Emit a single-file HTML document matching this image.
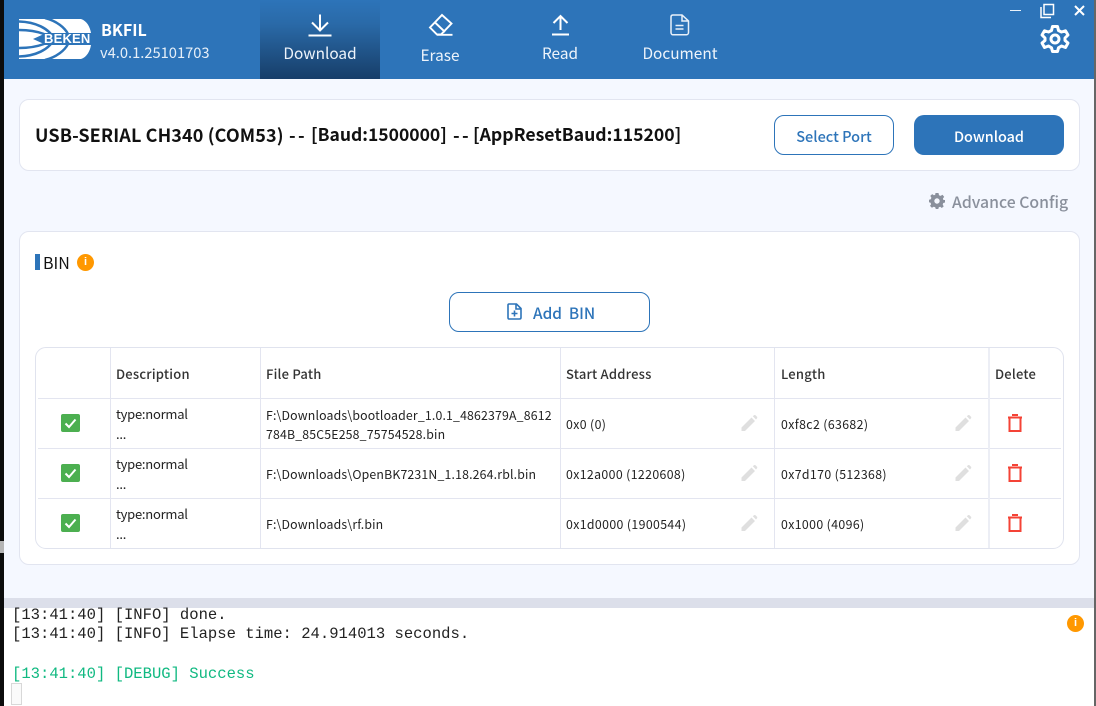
<!DOCTYPE html>
<html><head><meta charset="utf-8"><style>
*{box-sizing:border-box}
html,body{margin:0;padding:0}
body{width:1096px;height:706px;position:relative;overflow:hidden;background:#f5f8ff;font-family:"Noto Sans CJK SC","Liberation Sans",sans-serif;color:#222}
.a{position:absolute;white-space:nowrap}
.t{line-height:20px;font-size:13px;letter-spacing:-.25px}
.h{font-size:13px;line-height:20px;color:#333;letter-spacing:.22px;font-weight:500}
.f{line-height:20px;font-size:12.300px;letter-spacing:.17px}
.n{line-height:20px;font-size:12.300px;letter-spacing:.38px}
.nav{color:#eef4fb;font-size:15.400px;line-height:20px;text-align:center;width:120px}
.card{position:absolute;background:#fff;border:1px solid #e2e5f0;border-radius:10px}
.l{position:absolute;background:#e3e5f0}
.log{position:absolute;left:12px;font:15.55px/20px "Liberation Mono",monospace;color:#222;white-space:pre}
.info{position:absolute;border-radius:50%;background:#ff9800;color:#fff;font:bold 11px/17px 'Liberation Sans',sans-serif;text-align:center}
.ti{position:absolute;top:122px;white-space:nowrap;line-height:26px;font-weight:700;color:#111}
</style></head><body>
<div class="a" style="left:0;top:0;width:4px;height:706px;background:#0c0c0c"></div>
<div class="a" style="left:0;top:541px;width:4px;height:12px;background:#b5b5b5"></div>
<div class="a" style="left:1094px;top:0;width:2px;height:706px;background:#666"></div>
<div class="a" style="left:4px;top:0;width:1090px;height:79px;background:#2d74b9"></div>
<div class="a" style="left:260px;top:0;width:120px;height:79px;background:linear-gradient(#2d74b9 0%,#2a6aa8 30%,#173e69 100%)"></div>

<svg class="a" style="left:19px;top:19px" width="72" height="40" viewBox="0 0 72 40">
<path fill="#fff" d="M0 0H62C68 2 71 8 72 14V26C71 32 68 38 62 40H0Z"/>
<rect x="24" y="14" width="48" height="12" fill="#2d74b9"/>
<g fill="none" stroke="#2d74b9" stroke-width="2.500">
<path d="M0 2.500C16 3 30 9 35 20C30 31 16 37 0 37.500"/>
<path d="M0 11C9 11 17 12 25 15M0 29C9 29 17 28 25 25"/>
<path d="M26 -1C38 2 46 9 49 15M26 41C38 38 46 31 49 25"/>
</g>
<path fill="#2d74b9" d="M25 15V25L14 20Z"/>
</svg>
<div class="a" style="left:44px;top:31px;font:bold 13px/15px 'Liberation Sans',sans-serif;color:#fff;letter-spacing:.2px">BEKEN</div>
<div class="a" style="left:101px;top:19px;font-size:16px;line-height:20px;font-weight:700;color:#fff">BKFIL</div>
<div class="a" style="left:100px;top:43px;font-size:14.700px;line-height:20px;color:#e6eff8">v4.0.1.25101703</div>

<svg class="a" style="left:307px;top:13px" width="26" height="24" viewBox="0 0 26 24" fill="none" stroke="#fff" stroke-width="2"><path d="M1.500 22.500H24.500M13 1.500V17M5 9.500L13 17.500L21 9.500"/></svg>
<div class="a nav" style="left:260px;top:43px">Download</div>

<svg class="a" style="left:428px;top:13px" width="25" height="24" viewBox="0 0 25 24" fill="none" stroke="#fff" stroke-width="1.900"><path d="M14 2L23.500 10.500L13 21.500H9L2 14.500ZM6.500 9L17 19M9 21.800H24.500"/></svg>
<div class="a nav" style="left:380px;top:45px">Erase</div>

<svg class="a" style="left:551px;top:14px" width="19" height="22" viewBox="0 0 19 22" fill="none" stroke="#fff" stroke-width="2"><path d="M1 20.500H18M9.500 16V2M2.500 9L9.500 2L16.500 9"/></svg>
<div class="a nav" style="left:500px;top:43px">Read</div>

<svg class="a" style="left:670px;top:14px" width="20" height="22" viewBox="0 0 20 22" fill="none" stroke="#e8f0f9" stroke-width="1.500"><path d="M3 1H12L18.500 7V18.500C18.500 19.800 17.500 20.800 16.500 20.800H3C1.800 20.800 1 19.800 1 18.500V3C1 1.800 1.800 1 3 1ZM12 1V7H18.500M5.500 11.500H13.500M5.500 15H13.500"/></svg>
<div class="a nav" style="left:620px;top:43px">Document</div>

<div class="a" style="left:1010px;top:10px;width:11px;height:1px;background:#eaf2fa"></div>
<svg class="a" style="left:1040px;top:3px" width="15" height="16" viewBox="0 0 15 16" fill="none" stroke="#fff" stroke-width="1.500"><path d="M4 1.500H13.500V11.500H4ZM1 4V14.500H11"/></svg>
<svg class="a" style="left:1074px;top:5px" width="11" height="11" viewBox="0 0 11 11" fill="none" stroke="#fff" stroke-width="2"><path d="M1 1L10 10M10 1L1 10"/></svg>
<svg class="a" style="left:1040px;top:24px" width="30" height="30" viewBox="0 0 30 30" fill="none" stroke="#fff" stroke-width="3" stroke-linejoin="round"><path d="M12.500 2.500H17.500L18.500 6.500L21.500 8L25.500 6.800L28 11L25 14V16.500L28 19L25.500 23.500L21.500 22L18.500 23.800L17.500 27.500H12.500L11.500 23.800L8.500 22L4.500 23.500L2 19L5 16.500V14L2 11L4.500 6.800L8.500 8L11.500 6.500Z"/><circle cx="15" cy="15" r="4"/></svg>

<div class="card" style="left:19px;top:99px;width:1061px;height:72px"></div>
<div class="ti" style="left:35px;font-size:18px;letter-spacing:.11px">USB-SERIAL CH340 (COM53)</div>
<div class="ti" style="left:289px;font-size:18px;letter-spacing:2.400px">--</div>
<div class="ti" style="left:311px;font-size:17.500px">[Baud:1500000]</div>
<div class="ti" style="left:453px;font-size:18px;letter-spacing:2.400px">--</div>
<div class="ti" style="left:473px;font-size:17.600px">[AppResetBaud:115200]</div>
<div class="a" style="left:774px;top:115px;width:120px;height:40px;border:1px solid #2d74b9;border-radius:10px;background:#fff;color:#2d74b9;font-size:14.500px;line-height:42px;text-align:center;font-weight:500">Select Port</div>
<div class="a" style="left:914px;top:115px;width:150px;height:40px;border-radius:10px;background:#2d74b9;color:#fff;font-size:14.400px;line-height:44px;text-align:center;font-weight:500">Download</div>

<svg class="a" style="left:929px;top:193px" width="16" height="16" viewBox="0 0 16 16"><path fill="#8a909c" fill-rule="evenodd" d="M6.500 0H9.500L10 2.200L11.600 2.900L13.500 1.800L15.200 3.900L13.900 5.500L14.400 7H16V9.500L14.300 10L13.700 11.500L14.700 13.400L12.800 15L11.200 13.800L9.800 14.300L9.300 16H6.800L6.200 14.200L4.700 13.700L2.900 14.800L1 12.900L2.100 11.200L1.600 9.800L0 9.300V6.700L1.800 6.200L2.400 4.700L1.300 2.900L3.200 1.100L4.900 2.200L6.200 1.700ZM8 5.300A2.700 2.700 0 1 0 8 10.700A2.700 2.700 0 1 0 8 5.300Z"/></svg>
<div class="a" style="left:952px;top:191px;font-size:15.800px;line-height:22px;font-weight:500;color:#8a909c">Advance Config</div>

<div class="card" style="left:19px;top:231px;width:1061px;height:334px"></div>
<div class="a" style="left:35px;top:254px;width:5px;height:16px;background:#2d74b9"></div>
<div class="a" style="left:43px;top:252px;font-size:16px;line-height:21px;color:#111">BIN</div>
<div class="info" style="left:77px;top:254px;width:17px;height:17px">i</div>

<div class="a" style="left:449px;top:292px;width:201px;height:40px;border:1px solid #2d74b9;border-radius:10px;background:#fff"></div>
<svg class="a" style="left:507px;top:303px" width="15" height="17" viewBox="0 0 15 17" fill="none" stroke="#2d74b9" stroke-width="1.600"><path d="M2 1H9.500L14 5.500V14.500C14 15.400 13.400 16 12.500 16H2C1.400 16 1 15.400 1 14.500V2C1 1.400 1.400 1 2 1ZM9 1V6H14M4.500 10.500H10.500M7.500 7.500V13.500"/></svg>
<div class="a" style="left:533px;top:303px;font-size:15.400px;line-height:21px;font-weight:500;color:#2d74b9;white-space:pre">Add  BIN</div>

<div class="a" style="left:35px;top:347px;width:1029px;height:202px;border:1px solid #e0e3ee;border-radius:11px;background:#fff"></div>
<div class="l" style="left:38px;top:398px;width:1023px;height:1px"></div>
<div class="l" style="left:38px;top:448px;width:1023px;height:1px"></div>
<div class="l" style="left:38px;top:498px;width:1023px;height:1px"></div>
<div class="l" style="left:110px;top:348px;width:1px;height:200px"></div>
<div class="l" style="left:260px;top:348px;width:1px;height:200px"></div>
<div class="l" style="left:560px;top:348px;width:1px;height:200px"></div>
<div class="l" style="left:774px;top:348px;width:1px;height:200px"></div>
<div class="l" style="left:988px;top:348px;width:2px;height:200px;background:#eceef5"></div>

<div class="a h" style="left:116px;top:364px">Description</div>
<div class="a h" style="left:266px;top:364px">File Path</div>
<div class="a h" style="left:566px;top:364px">Start Address</div>
<div class="a h" style="left:781px;top:364px">Length</div>
<div class="a h" style="left:995px;top:364px">Delete</div>

<div class="a" style="left:61px;top:414px;width:19px;height:18px;background:#4caf50;border-radius:2px"></div>
<svg class="a" style="left:61px;top:414px" width="19" height="18"><path d="M4.500 9.500L8 13L14.500 5.500" fill="none" stroke="#fff" stroke-width="2"/></svg>
<div class="a" style="left:61px;top:464px;width:19px;height:18px;background:#4caf50;border-radius:2px"></div>
<svg class="a" style="left:61px;top:464px" width="19" height="18"><path d="M4.500 9.500L8 13L14.500 5.500" fill="none" stroke="#fff" stroke-width="2"/></svg>
<div class="a" style="left:61px;top:514px;width:19px;height:18px;background:#4caf50;border-radius:2px"></div>
<svg class="a" style="left:61px;top:514px" width="19" height="18"><path d="M4.500 9.500L8 13L14.500 5.500" fill="none" stroke="#fff" stroke-width="2"/></svg>

<div class="a t" style="left:116px;top:404px">type:normal</div><div class="a t" style="left:116px;top:424px">...</div>
<div class="a t" style="left:116px;top:454px">type:normal</div><div class="a t" style="left:116px;top:474px">...</div>
<div class="a t" style="left:116px;top:504px">type:normal</div><div class="a t" style="left:116px;top:524px">...</div>

<div class="a f" style="left:266px;top:405px">F:\Downloads\bootloader_1.0.1_4862379A_8612</div>
<div class="a f" style="left:266px;top:424px">784B_85C5E258_75754528.bin</div>
<div class="a f" style="left:266px;top:464px">F:\Downloads\OpenBK7231N_1.18.264.rbl.bin</div>
<div class="a f" style="left:266px;top:514px">F:\Downloads\rf.bin</div>

<div class="a n" style="left:566px;top:414px">0x0 (0)</div>
<div class="a n" style="left:566px;top:464px">0x12a000 (1220608)</div>
<div class="a n" style="left:566px;top:514px">0x1d0000 (1900544)</div>
<div class="a n" style="left:781px;top:414px">0xf8c2 (63682)</div>
<div class="a n" style="left:781px;top:464px">0x7d170 (512368)</div>
<div class="a n" style="left:781px;top:514px">0x1000 (4096)</div>

<svg width="0" height="0" style="position:absolute"><defs>
<path id="p" d="M0.500 16V12.500L10.500 2.500L14 6L4 16ZM11.800 1.200L13 0.200C13.500 -0.100 14 -0.100 14.500 0.200L16 1.700C16.400 2.200 16.400 2.700 16 3.200L15 4.500Z" fill="#dfdfdf"/>
<path id="d" d="M0 3.500H14M4 1H10M1.500 3.500V17H12.500V3.500" fill="none" stroke="#f44336" stroke-width="2"/>
</defs></svg>
<svg class="a" style="left:741px;top:415px" width="17" height="17"><use href="#p"/></svg>
<svg class="a" style="left:741px;top:465px" width="17" height="17"><use href="#p"/></svg>
<svg class="a" style="left:741px;top:515px" width="17" height="17"><use href="#p"/></svg>
<svg class="a" style="left:955px;top:415px" width="17" height="17"><use href="#p"/></svg>
<svg class="a" style="left:955px;top:465px" width="17" height="17"><use href="#p"/></svg>
<svg class="a" style="left:955px;top:515px" width="17" height="17"><use href="#p"/></svg>
<svg class="a" style="left:1008px;top:414px" width="15" height="18"><use href="#d"/></svg>
<svg class="a" style="left:1008px;top:464px" width="15" height="18"><use href="#d"/></svg>
<svg class="a" style="left:1008px;top:514px" width="15" height="18"><use href="#d"/></svg>

<div class="a" style="left:4px;top:598px;width:1090px;height:10px;background:#dcdfea"></div>
<div class="a" style="left:4px;top:608px;width:1090px;height:98px;background:#fff"></div>
<div class="log" style="top:605px">[13:41:40] [INFO] done.</div>
<div class="log" style="top:624px">[13:41:40] [INFO] Elapse time: 24.914013 seconds.</div>
<div class="log" style="top:664px;color:#10b981">[13:41:40] [DEBUG] Success</div>
<div class="a" style="left:11px;top:683px;width:11px;height:22px;border:1px solid #d8d8d8;background:#fafafa"></div>
<div class="info" style="left:1067px;top:615px;width:17px;height:17px">i</div>
</body></html>
